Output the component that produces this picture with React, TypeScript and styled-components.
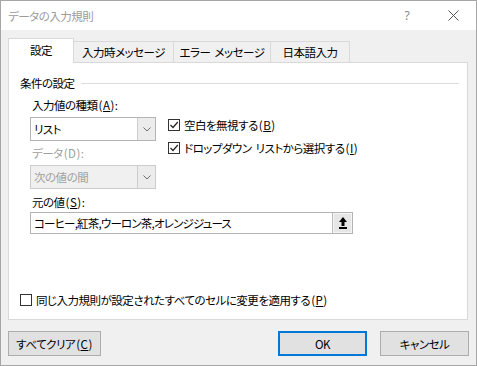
import React, { ReactElement } from "react";
import styled, { createGlobalStyle, css } from "styled-components";

const GlobalStyle = createGlobalStyle`
  html, body {
    margin: 0;
    padding: 0;
    background: #ffffff;
  }
  body {
    font-family: "Noto Sans CJK JP", "Noto Sans", sans-serif;
    font-size: 11.5px;
    letter-spacing: -0.5px;
    word-spacing: 2px;
    font-feature-settings: "palt";
    color: #000000;
  }
`;

const Window = styled.div`
  box-sizing: border-box;
  width: 477px;
  height: 366px;
  border: 1px solid #a6a6a6;
  background: #f0f0f0;
  display: flex;
  flex-direction: column;
`;

const TitleBar = styled.div`
  height: 29px;
  background: #ffffff;
  display: flex;
  align-items: center;
  padding-left: 7px;
  color: #9a9a9a;
  line-height: 16px;
`;

const Title = styled.div`
  flex: 1;
`;

const TitleButton = styled.div`
  width: 46px;
  height: 29px;
  display: flex;
  align-items: center;
  justify-content: center;
  color: #8a8a8a;
  font-family: "Noto Sans", sans-serif;
  font-size: 12px;
  letter-spacing: 0;
`;

const Content = styled.div`
  flex: 1;
  display: flex;
  flex-direction: column;
  padding: 8px 8px 0 7px;
`;

const TabStrip = styled.div`
  display: flex;
  align-items: flex-end;
  height: 24px;
  position: relative;
  z-index: 1;
`;

const Tab = styled.div<{ $active?: boolean; $w: number }>`
  box-sizing: border-box;
  width: ${(p) => p.$w}px;
  display: flex;
  align-items: center;
  justify-content: center;
  white-space: nowrap;
  border: 1px solid #d9d9d9;
  border-bottom: none;
  line-height: 16px;
  & + & {
    margin-left: -1px;
  }
  ${(p) =>
    p.$active
      ? css`
          height: 25px;
          background: #ffffff;
          margin-bottom: -1px;
          padding-bottom: 2px;
        `
      : css`
          height: 21px;
          background: #f0f0f0;
        `}
`;

const Panel = styled.div`
  box-sizing: border-box;
  height: 258px;
  background: #ffffff;
  border: 1px solid #d9d9d9;
  display: flex;
  flex-direction: column;
  padding: 12px 8px 11px 11px;
`;

const GroupHeader = styled.div`
  display: flex;
  align-items: center;
  gap: 6px;
  line-height: 16px;
  &::after {
    content: "";
    flex: 1;
    height: 1px;
    background: #dcdcdc;
  }
`;

const Fields = styled.div`
  display: flex;
  flex-direction: column;
  padding-left: 10px;
`;

const FieldLabel = styled.div<{ $mt: number; $disabled?: boolean }>`
  line-height: 16px;
  padding-left: 2px;
  margin-top: ${(p) => p.$mt}px;
  color: ${(p) => (p.$disabled ? "#a0a0a0" : "#000000")};
`;

// access-key suffix like "(A):" — Latin glyphs need normal spacing
const Key = styled.span`
  letter-spacing: 0.5px;
  margin-left: 1px;
`;

const Row = styled.div`
  display: flex;
  align-items: flex-start;
  gap: 12px;
`;

const Column = styled.div`
  display: flex;
  flex-direction: column;
`;

const CheckColumn = styled.div`
  display: flex;
  flex-direction: column;
  gap: 7px;
  margin-top: 4px;
`;

const SelectBox = styled.div<{ $disabled?: boolean; $mt?: number }>`
  box-sizing: border-box;
  width: 126px;
  height: 24px;
  margin-top: ${(p) => p.$mt ?? 0}px;
  display: flex;
  border: 1px solid ${(p) => (p.$disabled ? "#cccccc" : "#b4b4b4")};
  background: ${(p) => (p.$disabled ? "#f0f0f0" : "#ffffff")};
  color: ${(p) => (p.$disabled ? "#a0a0a0" : "#000000")};
`;

const SelectValue = styled.div`
  flex: 1;
  display: flex;
  align-items: center;
  padding-left: 3px;
`;

const DropButton = styled.div`
  width: 17px;
  display: flex;
  align-items: center;
  justify-content: center;
  background: #ececec;
  border-left: 1px solid #cccccc;
`;

const CheckRow = styled.label`
  display: flex;
  align-items: center;
  gap: 4px;
  height: 16px;
  line-height: 16px;
  white-space: nowrap;
`;

const Box = styled.span`
  box-sizing: border-box;
  width: 12px;
  height: 12px;
  border: 1px solid #333333;
  background: #ffffff;
  display: flex;
  align-items: center;
  justify-content: center;
`;

const SourceInput = styled.div`
  box-sizing: border-box;
  width: 323px;
  height: 22px;
  margin-top: 2px;
  display: flex;
  border: 1px solid #b4b4b4;
  background: #ffffff;
`;

const SourceText = styled.div`
  flex: 1;
  display: flex;
  align-items: center;
  padding-left: 3px;
  letter-spacing: -0.8px;
`;

const RefButton = styled.div`
  box-sizing: border-box;
  width: 20px;
  display: flex;
  align-items: center;
  justify-content: center;
  background: #e6e6e6;
  border-left: 1px solid #bcbcbc;
  box-shadow: inset 0 0 0 1px #f4f4f4;
`;

const BottomCheck = styled.div`
  margin-top: auto;
`;

const Footer = styled.div`
  display: flex;
  margin-top: 11px;
  margin-right: -1px;
`;

const Button = styled.button<{ $w: number; $default?: boolean }>`
  box-sizing: border-box;
  width: ${(p) => p.$w}px;
  height: 25px;
  padding: 0;
  font: inherit;
  letter-spacing: inherit;
  font-feature-settings: inherit;
  line-height: 16px;
  color: #000000;
  background: #e1e1e1;
  border: 1px solid ${(p) => (p.$default ? "#0078d7" : "#adadad")};
  ${(p) =>
    p.$default &&
    css`
      box-shadow: inset 0 0 0 1px #0078d7;
    `}
`;

const Spacer = styled.div`
  flex: 1;
`;

const ButtonGap = styled.div`
  width: 13px;
`;

const Chevron = (): ReactElement => (
  <svg width="8" height="5" viewBox="0 0 8 5">
    <polyline points="0.5,0.5 4,4 7.5,0.5" fill="none" stroke="#707070" strokeWidth="1" />
  </svg>
);

const Check = (): ReactElement => (
  <svg width="10" height="10" viewBox="0 0 10 10">
    <polyline points="1.5,5 4,7.5 8.8,2" fill="none" stroke="#222222" strokeWidth="1.2" />
  </svg>
);

const Checkbox = ({ checked, children }: { checked?: boolean; children: React.ReactNode }): ReactElement => (
  <CheckRow>
    <Box>{checked && <Check />}</Box>
    <span>{children}</span>
  </CheckRow>
);

const App = (): ReactElement => {
  return (
    <>
      <GlobalStyle />
      <Window>
        <TitleBar>
          <Title>データの入力規則</Title>
          <TitleButton>?</TitleButton>
          <TitleButton>
            <svg width="11" height="11" viewBox="0 0 11 11">
              <path d="M0.5 0.5 L10.5 10.5 M10.5 0.5 L0.5 10.5" stroke="#555555" strokeWidth="1" />
            </svg>
          </TitleButton>
        </TitleBar>
        <Content>
          <TabStrip>
            <Tab $active $w={66}>設定</Tab>
            <Tab $w={101}>入力時メッセージ</Tab>
            <Tab $w={98}>エラー メッセージ</Tab>
            <Tab $w={80}>日本語入力</Tab>
          </TabStrip>
          <Panel>
            <GroupHeader>条件の設定</GroupHeader>
            <Fields>
              <FieldLabel $mt={6}>
                入力値の種類<Key>(<u>A</u>):</Key>
              </FieldLabel>
              <Row>
                <Column>
                  <SelectBox $mt={4}>
                    <SelectValue>リスト</SelectValue>
                    <DropButton>
                      <Chevron />
                    </DropButton>
                  </SelectBox>
                  <FieldLabel $mt={4} $disabled>
                    データ<Key>(D):</Key>
                  </FieldLabel>
                  <SelectBox $mt={4} $disabled>
                    <SelectValue>次の値の間</SelectValue>
                    <DropButton>
                      <Chevron />
                    </DropButton>
                  </SelectBox>
                </Column>
                <CheckColumn>
                  <Checkbox checked>
                    空白を無視する<Key>(<u>B</u>)</Key>
                  </Checkbox>
                  <Checkbox checked>
                    ドロップダウン リストから選択する<Key>(<u>I</u>)</Key>
                  </Checkbox>
                </CheckColumn>
              </Row>
              <FieldLabel $mt={5}>
                元の値<Key>(<u>S</u>):</Key>
              </FieldLabel>
              <SourceInput>
                <SourceText>コーヒー,紅茶,ウーロン茶,オレンジジュース</SourceText>
                <RefButton>
                  <svg width="10" height="14" viewBox="0 0 10 14">
                    <polygon points="5,1 9,6 1,6" fill="#000000" />
                    <rect x="3.5" y="6" width="3" height="4" fill="#000000" />
                    <rect x="1" y="11" width="8" height="2" fill="#000000" />
                  </svg>
                </RefButton>
              </SourceInput>
            </Fields>
            <BottomCheck>
              <Checkbox>
                同じ入力規則が設定されたすべてのセルに変更を適用する<Key>(<u>P</u>)</Key>
              </Checkbox>
            </BottomCheck>
          </Panel>
          <Footer>
            <Button $w={93}>
              すべてクリア<Key>(<u>C</u>)</Key>
            </Button>
            <Spacer />
            <Button $w={89} $default>
              OK
            </Button>
            <ButtonGap />
            <Button $w={89}>キャンセル</Button>
          </Footer>
        </Content>
      </Window>
    </>
  );
};

export default App;
